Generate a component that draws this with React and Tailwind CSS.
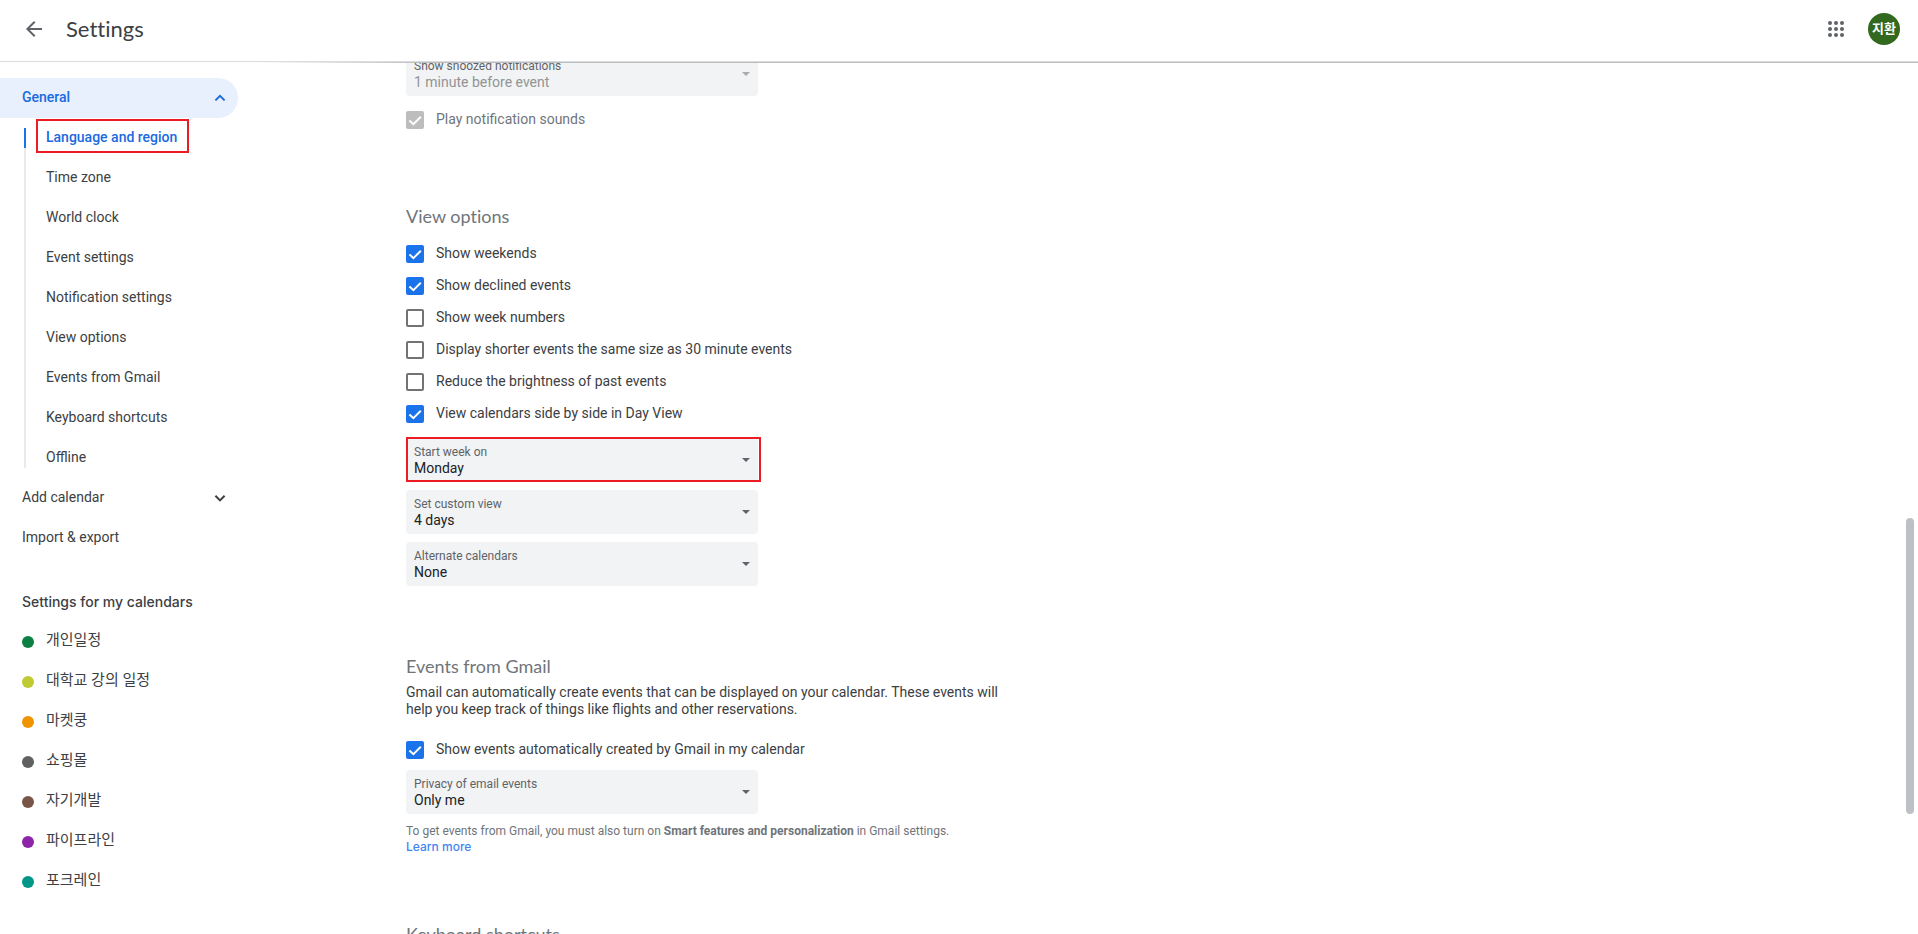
import React, { useState } from "react";

const sectionLinks = [
  "Language and region",
  "Time zone",
  "World clock",
  "Event settings",
  "Notification settings",
  "View options",
  "Events from Gmail",
  "Keyboard shortcuts",
  "Offline",
];

const calendars = [
  { name: "개인일정", dot: "bg-[#0b8043]" },
  { name: "대학교 강의 일정", dot: "bg-[#c0ca33]" },
  { name: "마켓쿵", dot: "bg-[#f09300]" },
  { name: "쇼핑몰", dot: "bg-[#616161]" },
  { name: "자기개발", dot: "bg-[#795548]" },
  { name: "파이프라인", dot: "bg-[#8e24aa]" },
  { name: "포크레인", dot: "bg-[#009688]" },
];

function Chevron({ up = false }) {
  return (
    <svg viewBox="0 0 16 16" className="size-4" fill="none" stroke="currentColor" strokeWidth="2" aria-hidden="true">
      <path d={up ? "M3.4 10.4 8 5.8l4.6 4.6" : "M3.4 5.8 8 10.4l4.6-4.6"} />
    </svg>
  );
}

function Checkbox({ id, label, checked: initial = false, disabled = false }) {
  const [checked, setChecked] = useState(initial);
  return (
    <div className="flex h-8 items-center">
      <span className="relative flex size-[18px] shrink-0">
        <input
          id={id}
          type="checkbox"
          checked={checked}
          disabled={disabled}
          onChange={(e) => setChecked(e.target.checked)}
          className="size-[18px] appearance-none rounded-xs border-2 border-[#737373] checked:border-[#1a73e8] checked:bg-[#1a73e8] checked:disabled:border-[#bdbdbd] checked:disabled:bg-[#bdbdbd]"
        />
        {checked && (
          <svg viewBox="0 0 18 18" className="pointer-events-none absolute inset-0 size-[18px]" fill="none" stroke="#fff" strokeWidth="2" aria-hidden="true">
            <path d="M3.4 9.4 7.4 13.2 14.8 5.8" />
          </svg>
        )}
      </span>
      <label htmlFor={id} className={disabled ? "pb-0.5 pl-3 text-[#70757a]" : "pb-0.5 pl-3 text-[#3c4043]"}>
        {label}
      </label>
    </div>
  );
}

function SelectField({ id, label, options, disabled = false, marked = false }) {
  return (
    <div className="relative w-[352px] max-w-full rounded bg-[#f1f3f4] px-2 py-1.5">
      <label htmlFor={id} className="block text-xs leading-4 text-[#5f6368]">
        {label}
      </label>
      <select
        id={id}
        disabled={disabled}
        className="block h-4 w-full appearance-none bg-transparent text-sm leading-4 text-[#202124] opacity-100 outline-none disabled:text-[#919395]"
      >
        {options.map((o) => (
          <option key={o}>{o}</option>
        ))}
      </select>
      <svg
        viewBox="0 0 8 4"
        className={
          disabled
            ? "pointer-events-none absolute top-5 right-2 h-1 w-2 text-[#a8aaad]"
            : "pointer-events-none absolute top-5 right-2 h-1 w-2 text-[#5f6368]"
        }
        fill="currentColor"
        aria-hidden="true"
      >
        <path d="M0 0h8L4 4z" />
      </svg>
      {marked && <span className="pointer-events-none absolute -top-px -right-[3px] bottom-0 left-0 border-2 border-[#ed1c24]" />}
    </div>
  );
}

function Heading({ children }) {
  return (
    <h2 className="font-['Lato',sans-serif] text-lg leading-6 text-[#70757a] [font-variant-ligatures:none]">{children}</h2>
  );
}

export default function App() {
  return (
    <div className="flex h-screen flex-col overflow-hidden bg-white font-['Roboto','Noto_Sans_CJK_KR',sans-serif] text-sm text-[#3c4043]">
      <header className="flex shrink-0 items-center border-b border-[#dadce0] pt-[13px] pr-[18px] pb-4 pl-[22px]">
        <button type="button" aria-label="Go back" className="text-[#5f6368]">
          <svg viewBox="0 0 24 24" className="size-6" fill="currentColor" aria-hidden="true">
            <path d="M20 11H7.83l5.59-5.59L12 4l-8 8 8 8 1.41-1.41L7.83 13H20v-2z" />
          </svg>
        </button>
        <h1 className="pl-5 font-['Lato',sans-serif] text-[22px] leading-6 text-[#3c4043] [font-variant-ligatures:none]">
          Settings
        </h1>
        <button type="button" aria-label="Google apps" className="ml-auto text-[#5f6368]">
          <svg viewBox="0 0 24 24" className="size-6" fill="currentColor" aria-hidden="true">
            {[6, 12, 18].map((y) => [6, 12, 18].map((x) => <circle key={`${x}-${y}`} cx={x} cy={y} r="2" />))}
          </svg>
        </button>
        <button
          type="button"
          aria-label="Account"
          className="ml-5 size-8 rounded-full bg-[#33691e] text-[13px] leading-8 font-bold text-white"
        >
          지환
        </button>
      </header>

      <div className="relative flex min-h-0 flex-1">
        <nav className="w-[238px] shrink-0 overflow-hidden pt-4" aria-label="Settings sections">
          <button
            type="button"
            className="flex h-10 w-full items-center justify-between rounded-r-full bg-[#e8f0fe] pr-2.5 pl-[22px] font-medium text-[#1a6ae0]"
          >
            <span className="pb-0.5">General</span>
            <Chevron up />
          </button>
          <ul className="relative">
            <li aria-hidden="true" className="absolute top-2.5 bottom-2.5 left-6 w-0.5 bg-[#e8eaed]">
              <span className="block h-5 bg-[#1a73e8]" />
            </li>
            {sectionLinks.map((name, i) => (
              <li key={name} className="flex h-10 items-center pb-0.5 pl-[46px]">
                {i === 0 ? (
                  <a href="#language" className="relative font-medium text-[#1a6ae0]">
                    {name}
                    <span className="pointer-events-none absolute -top-2 -right-3 -bottom-1.5 -left-2.5 border-2 border-[#ed1c24]" />
                  </a>
                ) : (
                  <a href={`#section-${i}`}>{name}</a>
                )}
              </li>
            ))}
          </ul>
          <button type="button" className="flex h-10 w-full items-center justify-between pr-2.5 pl-[22px]">
            <span className="pb-0.5">Add calendar</span>
            <Chevron />
          </button>
          <a href="#import" className="flex h-10 items-center pb-0.5 pl-[22px]">
            Import &amp; export
          </a>
          <h2 className="mt-6 flex h-10 items-center pl-[22px] font-['Inter',sans-serif] font-medium">
            Settings for my calendars
          </h2>
          <ul>
            {calendars.map((c) => (
              <li key={c.name}>
                <a href={`#${c.name}`} className="flex h-10 items-center gap-3 pl-[22px] text-[15px]">
                  <span className={`size-3 rounded-full ${c.dot}`} />
                  <span className="pb-0.5">{c.name}</span>
                </a>
              </li>
            ))}
          </ul>
        </nav>

        <main className="min-w-0 flex-1 overflow-hidden pl-42">
          <section className="-mt-2.5 space-y-2">
            <SelectField id="snoozed" label="Show snoozed notifications" options={["1 minute before event"]} disabled />
            <Checkbox id="sounds" label="Play notification sounds" checked disabled />
          </section>

          <section className="pt-[68px]">
            <Heading>View options</Heading>
            <div className="pt-2.5">
              <Checkbox id="weekends" label="Show weekends" checked />
              <Checkbox id="declined" label="Show declined events" checked />
              <Checkbox id="numbers" label="Show week numbers" />
              <Checkbox id="shorter" label="Display shorter events the same size as 30 minute events" />
              <Checkbox id="brightness" label="Reduce the brightness of past events" />
              <Checkbox id="side" label="View calendars side by side in Day View" checked />
            </div>
            <div className="space-y-2 pt-2">
              <SelectField id="start" label="Start week on" options={["Monday", "Saturday", "Sunday"]} marked />
              <SelectField id="custom" label="Set custom view" options={["4 days", "5 days", "2 weeks"]} />
              <SelectField id="alternate" label="Alternate calendars" options={["None"]} />
            </div>
          </section>

          <section className="pt-[68px]">
            <Heading>Events from Gmail</Heading>
            <p className="max-w-[600px] pt-1.5 pb-4 leading-[17px]">
              Gmail can automatically create events that can be displayed on your calendar. These events will help you keep
              track of things like flights and other reservations.
            </p>
            <Checkbox id="gmail" label="Show events automatically created by Gmail in my calendar" checked />
            <div className="pt-1">
              <SelectField id="privacy" label="Privacy of email events" options={["Only me", "Calendar default"]} />
            </div>
            <p className="max-w-[600px] pt-2.5 text-xs leading-[15px] text-[#70757a]">
              To get events from Gmail, you must also turn on <b>Smart features and personalization</b> in Gmail settings.
              <a href="#learn" className="block font-['Inter',sans-serif] font-medium text-[#4285f4]">
                Learn more
              </a>
            </p>
          </section>

          <section className="pt-[68px]">
            <Heading>Keyboard shortcuts</Heading>
          </section>
        </main>

        <span
          aria-hidden="true"
          className="pointer-events-none absolute top-0 right-0 left-64 h-px bg-linear-to-r from-transparent to-[#bdbdbd] to-10%"
        />
        <span aria-hidden="true" className="absolute top-[456px] right-1 h-[296px] w-2 rounded-full bg-[#bdc1c6]" />
      </div>
    </div>
  );
}
